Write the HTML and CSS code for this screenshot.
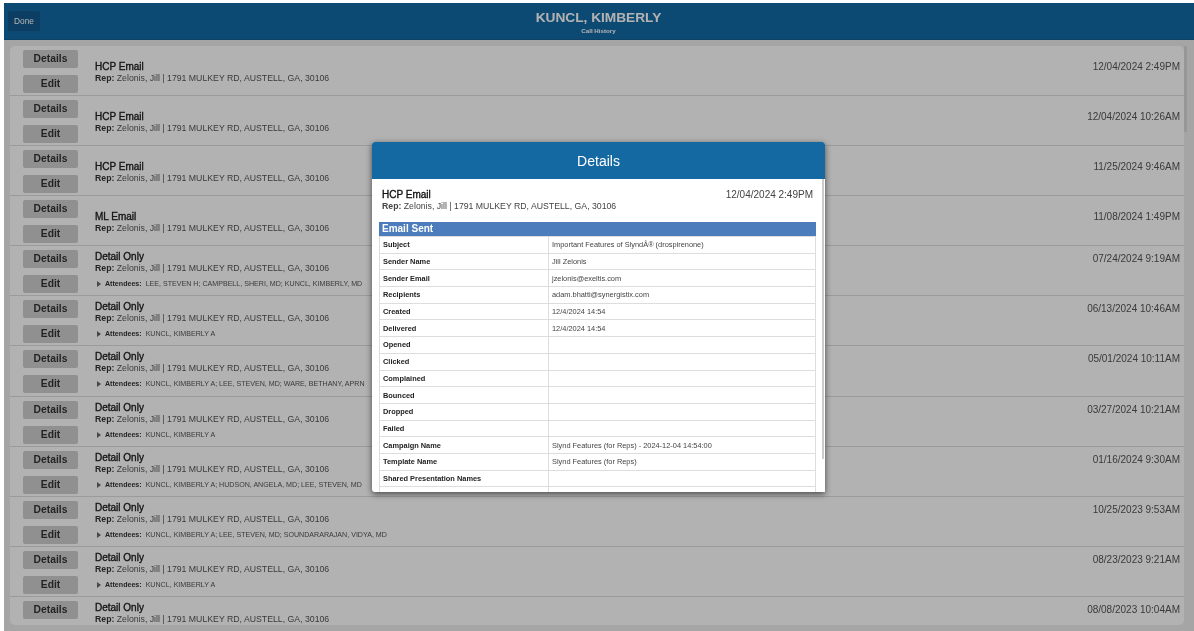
FILE: index.html
```html
<!DOCTYPE html>
<html lang="en">
<head>
<meta charset="utf-8">
<title>Call History</title>
<link rel="stylesheet" href="styles.css">
</head>
<body>
<div class="page">
  <header class="topbar">
    <button class="done">Done</button>
    <div class="titles">
      <div class="name">KUNCL, KIMBERLY</div>
      <div class="sub">Call History</div>
    </div>
  </header>
  <main class="list">
    <div class="row"><div class="btns"><span class="btn">Details</span><span class="btn">Edit</span></div><div class="info low"><div class="type">HCP Email</div><div class="rep"><b>Rep:</b> Zelonis, Jill | 1791 MULKEY RD, AUSTELL, GA, 30106</div></div><div class="when">12/04/2024 2:49PM</div></div>
    <div class="row"><div class="btns"><span class="btn">Details</span><span class="btn">Edit</span></div><div class="info low"><div class="type">HCP Email</div><div class="rep"><b>Rep:</b> Zelonis, Jill | 1791 MULKEY RD, AUSTELL, GA, 30106</div></div><div class="when">12/04/2024 10:26AM</div></div>
    <div class="row"><div class="btns"><span class="btn">Details</span><span class="btn">Edit</span></div><div class="info low"><div class="type">HCP Email</div><div class="rep"><b>Rep:</b> Zelonis, Jill | 1791 MULKEY RD, AUSTELL, GA, 30106</div></div><div class="when">11/25/2024 9:46AM</div></div>
    <div class="row"><div class="btns"><span class="btn">Details</span><span class="btn">Edit</span></div><div class="info low"><div class="type">ML Email</div><div class="rep"><b>Rep:</b> Zelonis, Jill | 1791 MULKEY RD, AUSTELL, GA, 30106</div></div><div class="when">11/08/2024 1:49PM</div></div>
    <div class="row"><div class="btns"><span class="btn">Details</span><span class="btn">Edit</span></div><div class="info"><div class="type">Detail Only</div><div class="rep"><b>Rep:</b> Zelonis, Jill | 1791 MULKEY RD, AUSTELL, GA, 30106</div><div class="att"><i class="tri"></i><b>Attendees:</b> LEE, STEVEN H; CAMPBELL, SHERI, MD; KUNCL, KIMBERLY, MD</div></div><div class="when">07/24/2024 9:19AM</div></div>
    <div class="row"><div class="btns"><span class="btn">Details</span><span class="btn">Edit</span></div><div class="info"><div class="type">Detail Only</div><div class="rep"><b>Rep:</b> Zelonis, Jill | 1791 MULKEY RD, AUSTELL, GA, 30106</div><div class="att"><i class="tri"></i><b>Attendees:</b> KUNCL, KIMBERLY A</div></div><div class="when">06/13/2024 10:46AM</div></div>
    <div class="row"><div class="btns"><span class="btn">Details</span><span class="btn">Edit</span></div><div class="info"><div class="type">Detail Only</div><div class="rep"><b>Rep:</b> Zelonis, Jill | 1791 MULKEY RD, AUSTELL, GA, 30106</div><div class="att"><i class="tri"></i><b>Attendees:</b> KUNCL, KIMBERLY A; LEE, STEVEN, MD; WARE, BETHANY, APRN</div></div><div class="when">05/01/2024 10:11AM</div></div>
    <div class="row"><div class="btns"><span class="btn">Details</span><span class="btn">Edit</span></div><div class="info"><div class="type">Detail Only</div><div class="rep"><b>Rep:</b> Zelonis, Jill | 1791 MULKEY RD, AUSTELL, GA, 30106</div><div class="att"><i class="tri"></i><b>Attendees:</b> KUNCL, KIMBERLY A</div></div><div class="when">03/27/2024 10:21AM</div></div>
    <div class="row"><div class="btns"><span class="btn">Details</span><span class="btn">Edit</span></div><div class="info"><div class="type">Detail Only</div><div class="rep"><b>Rep:</b> Zelonis, Jill | 1791 MULKEY RD, AUSTELL, GA, 30106</div><div class="att"><i class="tri"></i><b>Attendees:</b> KUNCL, KIMBERLY A; HUDSON, ANGELA, MD; LEE, STEVEN, MD</div></div><div class="when">01/16/2024 9:30AM</div></div>
    <div class="row"><div class="btns"><span class="btn">Details</span><span class="btn">Edit</span></div><div class="info"><div class="type">Detail Only</div><div class="rep"><b>Rep:</b> Zelonis, Jill | 1791 MULKEY RD, AUSTELL, GA, 30106</div><div class="att"><i class="tri"></i><b>Attendees:</b> KUNCL, KIMBERLY A; LEE, STEVEN, MD; SOUNDARARAJAN, VIDYA, MD</div></div><div class="when">10/25/2023 9:53AM</div></div>
    <div class="row"><div class="btns"><span class="btn">Details</span><span class="btn">Edit</span></div><div class="info"><div class="type">Detail Only</div><div class="rep"><b>Rep:</b> Zelonis, Jill | 1791 MULKEY RD, AUSTELL, GA, 30106</div><div class="att"><i class="tri"></i><b>Attendees:</b> KUNCL, KIMBERLY A</div></div><div class="when">08/23/2023 9:21AM</div></div>
    <div class="row"><div class="btns"><span class="btn">Details</span><span class="btn btn-peek"></span></div><div class="info"><div class="type">Detail Only</div><div class="rep"><b>Rep:</b> Zelonis, Jill | 1791 MULKEY RD, AUSTELL, GA, 30106</div></div><div class="when">08/08/2023 10:04AM</div></div>
  </main>
  <div class="thumb"></div>
  <div class="dim"></div>
</div>
<section class="modal">
  <div class="modal-head">Details</div>
  <div class="modal-body">
    <div class="summary">
      <div><div class="s-type">HCP Email</div><div class="s-rep"><b>Rep:</b> Zelonis, Jill | 1791 MULKEY RD, AUSTELL, GA, 30106</div></div>
      <div class="s-when">12/04/2024 2:49PM</div>
    </div>
    <div class="sect">Email Sent</div>
    <table class="tbl">
      <tr><th>Subject</th><td>Important Features of SlyndÂ® (drospirenone)</td></tr>
      <tr><th>Sender Name</th><td>Jill Zelonis</td></tr>
      <tr><th>Sender Email</th><td>jzelonis@exeltis.com</td></tr>
      <tr><th>Recipients</th><td>adam.bhatti@synergistix.com</td></tr>
      <tr><th>Created</th><td>12/4/2024 14:54</td></tr>
      <tr><th>Delivered</th><td>12/4/2024 14:54</td></tr>
      <tr><th>Opened</th><td></td></tr>
      <tr><th>Clicked</th><td></td></tr>
      <tr><th>Complained</th><td></td></tr>
      <tr><th>Bounced</th><td></td></tr>
      <tr><th>Dropped</th><td></td></tr>
      <tr><th>Failed</th><td></td></tr>
      <tr><th>Campaign Name</th><td>Slynd Features (for Reps) - 2024-12-04 14:54:00</td></tr>
      <tr><th>Template Name</th><td>Slynd Features (for Reps)</td></tr>
      <tr><th>Shared Presentation Names</th><td></td></tr>
      <tr><th></th><td></td></tr>
    </table>
  </div>
  <div class="modal-thumb"></div>
</section>
</body>
</html>
```
FILE: styles.css
```css
* { box-sizing: border-box; }
html, body { margin: 0; height: 100%; overflow: hidden; }
body { font-family: "Liberation Sans", Arial, sans-serif; background: #fff; color: #222; }
.page { position: relative; height: 628px; margin: 3px 0 0 4px; background: #ececec; overflow: hidden; filter: blur(.4px); }
.topbar { height: 37px; background: #146ba5; border-bottom: 1px solid #125f93; display: flex; align-items: center; justify-content: center; position: relative; color: #fff; }
.done { position: absolute; left: 4px; top: 8px; width: 32px; height: 20px; border: 0; border-radius: 2px; background: #115a8d; color: #fff; font: 8.3px "Liberation Sans", Arial, sans-serif; padding: 0; }
.titles { text-align: center; margin-left: -1px; }
.name { font-size: 13.7px; font-weight: bold; line-height: 16px; margin-top: 2px; }
.sub { font-size: 6.2px; line-height: 9px; font-weight: bold; }
.list { height: 579px; margin: 6px 10px 0 6px; background: #fff; border-radius: 5px; overflow: hidden; }
.row { height: 50.08px; border-bottom: 1px solid #dedede; display: flex; padding-left: 13px; }
.btns { width: 55px; display: flex; flex-direction: column; gap: 7px; padding-top: 4px; flex: none; }
.btn { height: 18px; flex: none; background: #cfcfcf; border-radius: 2px; text-align: center; font-size: 10.3px; font-weight: bold; line-height: 18px; color: #333; }
.info { margin-left: 17px; flex: 1; min-width: 0; padding-top: 5px; }
.info.low { padding-top: 15px; }
.type { font-size: 10px; line-height: 12px; color: #222; -webkit-text-stroke: .35px #222; }
.rep { font-size: 8.72px; line-height: 10px; color: #555; }
.rep b { color: #333; }
.att { font-size: 7.1px; line-height: 10px; margin-top: 6px; color: #555; display: flex; align-items: center; white-space: pre; }
.att b { color: #333; margin-right: 2px; }
.tri { width: 0; height: 0; border-left: 4px solid #666; border-top: 3px solid transparent; border-bottom: 3px solid transparent; margin: 0 4px 0 2px; }
.when { font-size: 10px; color: #555; padding: 15px 4px 0 0; }
.info:not(.low) + .when { padding-top: 7px; }
.thumb { position: absolute; right: 7px; top: 43px; width: 3px; height: 86px; background: #d8d8d8; }
.dim { position: absolute; inset: 0; background: rgba(0, 0, 0, .3); }
.modal { position: fixed; left: 372px; top: 142px; width: 453px; height: 350px; background: #fff; border-radius: 3px 3px 0 3px; box-shadow: 0 2px 6px rgba(0, 0, 0, .6); overflow: hidden; filter: blur(.3px); }
.modal-head { height: 37px; background: #1569a3; color: #fff; text-align: center; font-size: 14px; line-height: 38px; }
.modal-body { padding: 0 9px 0 7px; }
.summary { display: flex; justify-content: space-between; padding: 10px 3px 0 3px; height: 43px; }
.s-type { font-size: 10px; line-height: 12px; color: #111; -webkit-text-stroke: .35px #111; }
.s-rep { font-size: 8.72px; line-height: 10px; color: #444; }
.s-when { font-size: 10px; line-height: 12px; color: #444; }
.sect { height: 14px; background: #4d7cbc; color: #fff; font-size: 10px; font-weight: bold; line-height: 14px; padding-left: 3px; }
.tbl { width: 100%; border-collapse: collapse; table-layout: fixed; }
.tbl tr { height: 16.7px; }
.tbl th, .tbl td { border: 1px solid #ddd; font-size: 7.4px; padding: 0 3px; text-align: left; color: #444; }
.tbl th { width: 169px; color: #222; }
.modal-thumb { position: absolute; right: 1px; top: 37px; width: 2px; height: 280px; background: #ccc; }
```
